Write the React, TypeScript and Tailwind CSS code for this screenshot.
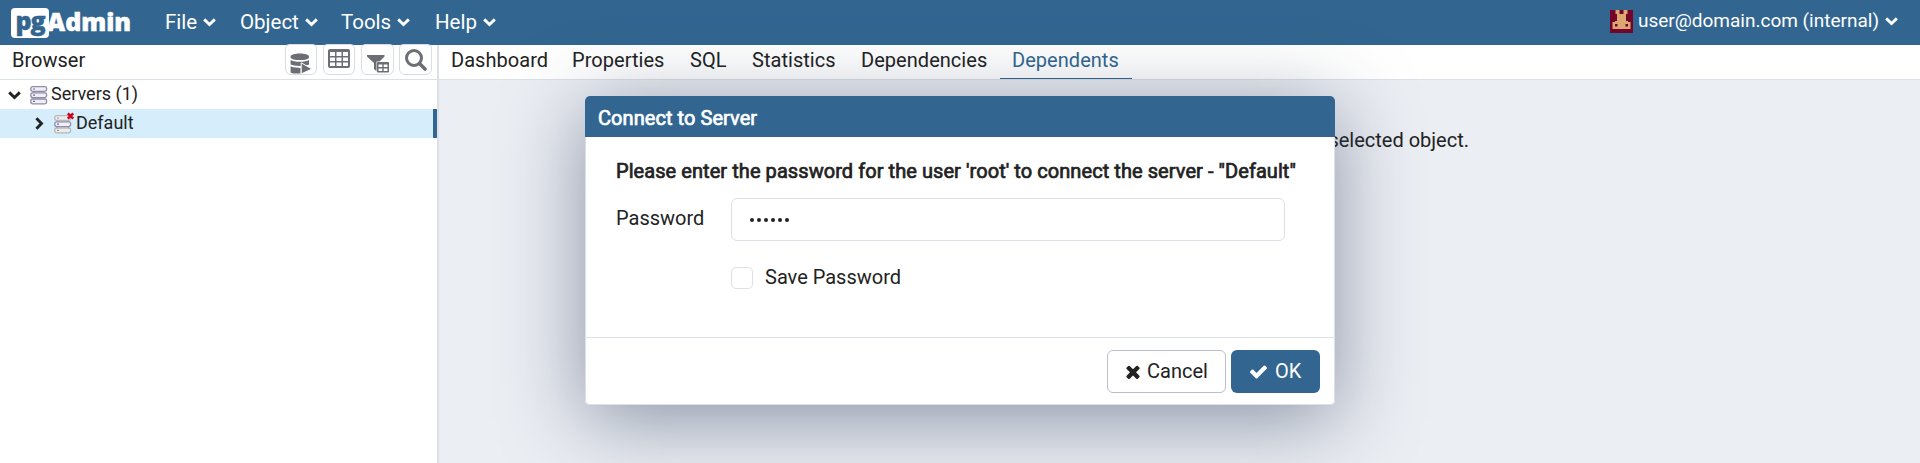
import React from "react";

const FONT = "font-['Roboto','Noto_Sans',sans-serif]";

function Caret({ className = "" }: { className?: string }) {
  return (
    <svg viewBox="0 0 13 9" className={"h-[9px] w-[13px] " + className} fill="none" stroke="currentColor" strokeWidth="2.9" strokeLinejoin="miter">
      <path d="M1.200 1.400 6.500 6.500 11.800 1.400" />
    </svg>
  );
}

function ServerIcon({ off = false }: { off?: boolean }) {
  return (
    <svg viewBox="0 0 18 18" className="h-[18px] w-[18px] shrink-0 overflow-visible">
      {[0, 6.2, 12.4].map((y, i) => {
        const dim = off && i !== 1;
        return (
          <g key={y}>
            <rect x="0.800" y={y + 0.6} width="15.800" height="4.800" rx="1.800" fill={dim ? "#ececec" : "#efeff4"} stroke={dim ? "#b8b8b8" : "#8f8cab"} strokeWidth="1.300" />
            <path d={`M3 ${y + 3}H5`} stroke={dim ? "#9a9a9a" : "#6f6c8d"} strokeWidth="1.200" />
          </g>
        );
      })}
      <path d="M3 5.800V6.600M14.400 5.800V6.600M3 12V12.800M14.400 12V12.800" stroke="#9794ae" strokeWidth="1.200" />
      {off && <path d="M13.800 -1.700 19.200 3.700M19.200 -1.700 13.800 3.700" stroke="#d0021b" strokeWidth="2.500" />}
    </svg>
  );
}

const toolBox = "-mt-px flex h-[31px] items-start justify-center rounded-b-[6px] rounded-t-[4px] border border-[#d9dce5] text-[#6b6e74]";

function Toolbar() {
  return (
    <div className="flex gap-1.5 self-start">
      <div className={toolBox + " w-8"}>
        <svg viewBox="0 0 22 21" className="mt-[8px] h-[21px] w-[22px]" fill="currentColor">
          <path d="M.6 3.400C.6 -.6 19 -.6 19 3.400V4.200C19 8 .6 8 .6 4.200z" />
          <path d="M.6 7c3 2.400 15.400 2.400 18.400 0v4.600c-3 1.800-15.400 1.800-18.400 0z" />
          <path d="M.6 13.300c3 1.500 7 1.600 10 1.600v5.600C6 20.600 2 20.600.6 19.400z" />
          <path d="M11.200 9.800 22 16 11.200 20.900z" stroke="#fff" strokeWidth="1" />
        </svg>
      </div>
      <div className={toolBox + " w-8"}>
        <svg viewBox="0 0 22 19" className="mt-[4px] h-[19px] w-[22px]" fill="currentColor" fillRule="evenodd">
          <path d="M2 0H20Q22 0 22 2V17Q22 19 20 19H2Q0 19 0 17V2Q0 0 2 0ZM2 3V7H7V3ZM8.500 3V7H13.500V3ZM15 3V7H20V3ZM2 8.500V12H7V8.500ZM8.500 8.500V12H13.500V8.500ZM15 8.500V12H20V8.500ZM2 13.500V17H7V13.500ZM8.500 13.500V17H13.500V13.500ZM15 13.500V17H20V13.500Z" />
        </svg>
      </div>
      <div className={toolBox + " w-[33px]"}>
        <svg viewBox="0 0 24 18" className="mt-[10px] h-[18px] w-6" fill="currentColor" fillRule="evenodd">
          <path d="M1 0H18.500V1.500L12 8V17.500L8 14V8L1 1.500Z" />
          <path d="M10.500 6.500H23.500V17.500H10.500Z" fill="#fff" />
          <path d="M12 7H22Q23 7 23 8V16.500Q23 17.500 22 17.500H12Q11 17.500 11 16.500V8Q11 7 12 7ZM12.500 9.500V12H16.300V9.500ZM17.700 9.500V12H21.500V9.500ZM12.500 13.400V16H16.300V13.400ZM17.700 13.400V16H21.500V13.400Z" />
        </svg>
      </div>
      <div className={toolBox + " -ml-px w-[33px]"}>
        <svg viewBox="0 0 22 22" className="mt-[4px] h-[22px] w-[22px]" fill="none" stroke="currentColor">
          <circle cx="9" cy="9" r="7.500" strokeWidth="3" />
          <path d="M14.500 14.500 20 20" strokeWidth="3.600" strokeLinecap="round" />
        </svg>
      </div>
    </div>
  );
}

function Avatar() {
  return (
    <svg viewBox="0 0 23 23" className="h-[23px] w-[23px]">
      <path fill="#750528" d="M0 0H23V23H0z" />
      <path fill="#dca672" d="M5.500 0H9.500V4H13.500V0H17.500V4H16V11H18V12H20.500V19H2.500V12H5V11H7V4H5.500z" />
      <path fill="#750528" d="M5 14H7.500V16.500H5zM15.500 14H18V16.500H15.500z" />
    </svg>
  );
}

function Logo() {
  return (
    <div className="flex w-[154px] items-center font-['Open_Sans',sans-serif] leading-none font-extrabold">
      <span className="flex h-[30px] w-[38px] items-center justify-center rounded-[4px] bg-white pb-[5px] text-[25px] tracking-[-1px] text-[#326690] [-webkit-text-stroke:0.4px]">pg</span>
      <span className="-mt-[2px] -ml-[2px] text-[25px] [-webkit-text-stroke:0.5px]">Admin</span>
    </div>
  );
}

function Header() {
  return (
    <header className="flex h-[45px] shrink-0 items-center bg-[#326690] pr-[22px] pl-[11px] text-[20.5px] text-white">
      <Logo />
      <nav className="flex flex-1">
        {[["File", "w-[75px]"], ["Object", "w-[101px]"], ["Tools", "w-[94px]"], ["Help", "w-[80px]"]].map(([t, w]) => (
          <span key={t} className={"flex items-center gap-[6px] " + w}>
            {t}
            <Caret />
          </span>
        ))}
      </nav>
      <div className="flex items-center gap-[5px] pb-[2px] text-[19px]">
        <Avatar />
        <span>user@domain.com (internal)</span>
        <Caret className="ml-px" />
      </div>
    </header>
  );
}

function Dialog() {
  return (
    <section className="absolute top-[96px] left-[585px] flex h-[309px] w-[750px] flex-col rounded-[5px] bg-white">
      <h1 className="flex h-[41px] shrink-0 items-center rounded-t-[5px] bg-[#326690] pt-[2px] pl-[13px] text-[20px] tracking-[0.06px] text-white [-webkit-text-stroke:0.7px]">Connect to Server</h1>
      <div className="flex-1 border-x border-[#dde0e6] pl-[30px] text-[20px]">
        <p className="mt-[20px] leading-7 tracking-[0.065px] whitespace-nowrap [-webkit-text-stroke:0.7px]">Please enter the password for the user 'root' to connect the server - "Default"</p>
        <div className="mt-[13px] flex">
          <label className="w-[115px] pt-[6px] leading-7">Password</label>
          <div className="flex h-[43px] w-[554px] items-center gap-[3px] rounded-[6px] border border-[#dde0e6] pl-[18px]">
            {[0, 1, 2, 3, 4, 5].map((i) => (
              <span key={i} className="size-[4px] rounded-full bg-[#222]" />
            ))}
          </div>
        </div>
        <div className="mt-[26px] flex h-[22px] items-center pl-[115px]">
          <span className="size-[22px] rounded-[5px] border border-[#dde0e6]" />
          <span className="-mt-[3px] ml-[12px]">Save Password</span>
        </div>
      </div>
      <footer className="flex h-[68px] shrink-0 justify-end gap-[5px] rounded-b-[5px] border border-[#dde0e6] pt-[12px] pr-[14px] text-[20px]">
        <button className="flex h-[43px] w-[119px] items-center rounded-[6px] border border-[#b9bdcd] pl-[18px]">
          <svg viewBox="302 302 1188 1252" className="mr-[7px] h-[14px] w-[14px]" fill="currentColor"><path d="M1490 1322q0 40-28 68l-136 136q-28 28-68 28t-68-28l-294-294-294 294q-28 28-68 28t-68-28l-136-136q-28-28-28-68t28-68l294-294-294-294q-28-28-28-68t28-68l136-136q28-28 68-28t68 28l294 294 294-294q28-28 68-28t68 28l136 136q28 28 28 68t-28 68l-294 294 294 294q28 28 28 68z" /></svg>
          <span className="-mt-[2px]">Cancel</span>
        </button>
        <button className="flex h-[43px] w-[89px] items-center rounded-[6px] bg-[#326690] pl-[19px] text-white">
          <svg viewBox="121 334 1550 1188" className="mr-[8px] h-[14px] w-[17px]" fill="currentColor"><path d="M1671 566q0 40-28 68l-724 724-136 136q-28 28-68 28t-68-28l-136-136-362-362q-28-28-28-68t28-68l136-136q28-28 68-28t68 28l294 295 656-657q28-28 68-28t68 28l136 136q28 28 28 68z" /></svg>
          <span className="-mt-[2px]">OK</span>
        </button>
      </footer>
    </section>
  );
}

export default function App() {
  return (
    <div className={"relative flex h-[463px] w-[1920px] flex-col overflow-hidden bg-white text-[20px] text-[#222] " + FONT}>
      <Header />
      <main className="flex min-h-0 flex-1">
        <aside className="w-[437px]">
          <div className="flex h-[35px] justify-between border-b border-[#dde0e6] pr-[5px] pl-[12px]">
            <span className="leading-[30px]">Browser</span>
            <Toolbar />
          </div>
          <div className="flex h-[29px] items-center pl-[8px] text-[18px]">
            <Caret className="mt-[2px] mr-[9px]" />
            <ServerIcon />
            <span className="-mt-[2px] ml-[3px]">Servers (1)</span>
          </div>
          <div className="flex h-[29px] items-center border-r-4 border-[#326690] bg-[#d6eefc] pl-[33px] text-[18px]">
            <Caret className="mr-[8px] -rotate-90" />
            <ServerIcon off />
            <span className="-mt-[2px] ml-[4px]">Default</span>
          </div>
        </aside>
        <div className="w-[2px] bg-[#dde0e6]" />
        <section className="flex flex-1 flex-col">
          <nav className="flex h-[35px] border-b border-[#dde0e6] leading-[30px]">
            {[["Dashboard", "w-[121px]"], ["Properties", "w-[118px]"], ["SQL", "w-[62px]"], ["Statistics", "w-[109px]"], ["Dependencies", "w-[151px]"], ["Dependents", "w-[132px] border-b text-[#326690]"]].map(([t, w]) => (
              <span key={t} className={"pl-[12px] tracking-[0.04px] " + w}>{t}</span>
            ))}
          </nav>
          <div className="flex-1 bg-[#ebeef3] pt-[46px] pr-[451px] text-right leading-[28px]">No dependent information is available for the selected object.</div>
        </section>
      </main>
      <div className="absolute top-[96px] left-[585px] h-[309px] w-[750px] rounded-[5px] shadow-[0_14px_80px_rgba(40,56,88,0.5)]" />
      <Dialog />
    </div>
  );
}
